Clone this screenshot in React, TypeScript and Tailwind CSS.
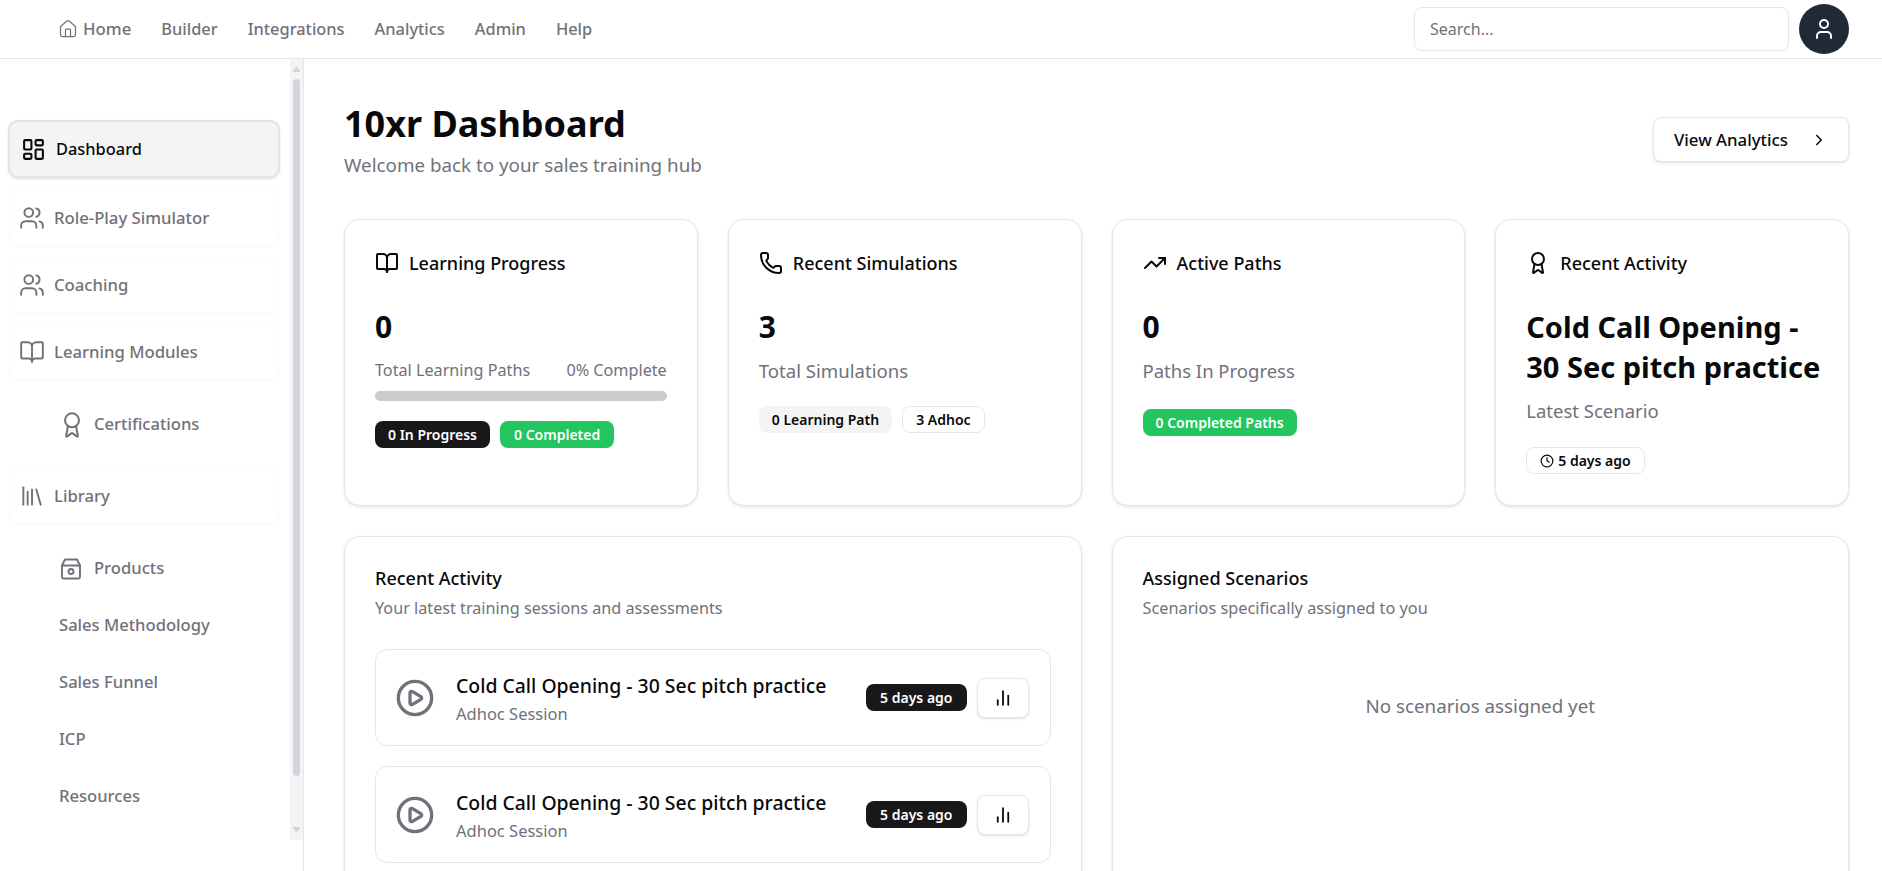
import React from "react";
import {
  House, LayoutDashboard, Users, BookOpen, Award, Library, Phone, TrendingUp, Clock,
  ChevronRight, User, CirclePlay, ChartNoAxesColumn,
} from "lucide-react";

const font = "font-['Noto_Sans','Liberation_Sans',sans-serif]";

function SideCard({ icon, label, active }: { icon: React.ReactNode; label: string; active?: boolean }) {
  return (
    <div
      className={
        active
          ? "flex h-[58px] items-center gap-[10px] rounded-[10px] border-2 border-[#e5e5e5] bg-[#f4f4f5] pl-[11px] text-[16.4px] font-medium text-[#09090b] shadow-sm"
          : "flex h-[57px] items-center gap-[9px] rounded-[10px] border border-[#fbfbfb] bg-white pl-[10px] text-[16.7px] font-medium text-[#71717a] shadow-[0_1px_1px_rgba(0,0,0,0.02)]"
      }
    >
      {icon}
      <span>{label}</span>
    </div>
  );
}

function SubItem({ icon, label }: { icon?: React.ReactNode; label: string }) {
  return (
    <div className="flex h-[57px] items-center gap-[11px] pl-[51px] text-[16.6px] font-medium text-[#71717a]">
      {icon}
      <span>{label}</span>
    </div>
  );
}

function ProductsIcon() {
  return (
    <svg width="24" height="24" viewBox="0 0 24 24" fill="none" stroke="currentColor" strokeWidth="1.9" strokeLinecap="round" strokeLinejoin="round">
      <path d="M3 8.5 L6 2.5 H18 L21 8.5 V20 a1.5 1.5 0 0 1 -1.5 1.5 H4.5 A1.5 1.5 0 0 1 3 20 Z" />
      <path d="M3 8.5 H21" />
      <circle cx="12" cy="14.5" r="2.5" />
    </svg>
  );
}

function Scrollbar() {
  return (
    <div className="flex h-[781px] w-[13px] shrink-0 flex-col items-center bg-[#f3f4f6]">
      <svg width="13" height="20" viewBox="0 0 13 20" className="shrink-0">
        <path d="M6.5 7 L10.5 13 L2.5 13 Z" fill="#d1d5db" />
      </svg>
      <div className="h-[697px] w-[7px] shrink-0 rounded-full bg-[#d1d5db]" />
      <div className="flex-1" />
      <svg width="13" height="20" viewBox="0 0 13 20" className="shrink-0">
        <path d="M6.5 13 L10.5 7 L2.5 7 Z" fill="#d1d5db" />
      </svg>
    </div>
  );
}

function Sidebar() {
  return (
    <aside className="flex h-[813px] w-[304px] shrink-0 items-start border-r border-[#e5e7eb] bg-white">
      <div className="flex w-[290px] shrink-0 flex-col pl-2 pr-[10px] pt-[61px]">
        <SideCard active icon={<LayoutDashboard size={25} strokeWidth={2} />} label="Dashboard" />
        <div className="mt-[11px] flex flex-col gap-[10px]">
          <SideCard icon={<Users size={26} strokeWidth={1.75} />} label="Role-Play Simulator" />
          <SideCard icon={<Users size={26} strokeWidth={1.75} />} label="Coaching" />
          <SideCard icon={<BookOpen size={26} strokeWidth={1.75} />} label="Learning Modules" />
        </div>
        <div className="mt-[16px]">
          <SubItem icon={<Award size={28} strokeWidth={1.75} className="-ml-[1px] -mr-[3px]" />} label="Certifications" />
        </div>
        <div className="mt-[14px]">
          <SideCard icon={<Library size={26} strokeWidth={1.75} />} label="Library" />
        </div>
        <div className="mt-[16px]">
          <SubItem icon={<ProductsIcon />} label="Products" />
          <SubItem label="Sales Methodology" />
          <SubItem label="Sales Funnel" />
          <SubItem label="ICP" />
          <SubItem label="Resources" />
        </div>
      </div>
      <Scrollbar />
    </aside>
  );
}

function Header() {
  const links = ["Builder", "Integrations", "Analytics", "Admin", "Help"];
  return (
    <header className="flex h-[59px] items-center justify-between border-b border-[#e5e7eb] bg-white pl-[58px] pr-[33px]">
      <nav className="flex items-center gap-[30px] text-[16.4px] font-medium text-[#71717a]">
        <span className="flex items-center gap-[5px] text-[16.8px]">
          <House size={20} strokeWidth={1.5} />
          Home
        </span>
        {links.map((l) => (
          <span key={l}>{l}</span>
        ))}
      </nav>
      <div className="flex items-center gap-[10px]">
        <div className="flex h-[44px] w-[375px] items-center rounded-[8px] border border-[#e5e7eb] bg-white px-[15px] text-[16px] text-[#71717a] shadow-[0_1px_2px_rgba(0,0,0,0.04)]">
          Search...
        </div>
        <div className="flex h-[50px] w-[50px] items-center justify-center rounded-full bg-[#1f2937] text-white">
          <User size={24} strokeWidth={2} />
        </div>
      </div>
    </header>
  );
}

function Card({ icon, title, children }: { icon: React.ReactNode; title: string; children: React.ReactNode }) {
  return (
    <div className="h-[287px] rounded-[16px] border border-[#e5e7eb] bg-white px-[30px] pt-[29px] shadow-[0_1px_3px_rgba(0,0,0,0.12)]">
      <div className="flex h-[28px] items-center gap-[10px] text-[18px] font-medium text-[#09090b]">
        {icon}
        <span>{title}</span>
      </div>
      {children}
    </div>
  );
}

function Badge({ className, children }: { className: string; children: React.ReactNode }) {
  return (
    <span className={"inline-flex h-[27px] items-center rounded-[8px] px-[13px] text-[14px] font-semibold " + className}>
      {children}
    </span>
  );
}

function ActivityRow() {
  return (
    <div className="flex h-[97px] items-center rounded-[12px] border border-[#e5e7eb] bg-white pl-[19px] pr-[21px]">
      <CirclePlay size={40} strokeWidth={2} className="shrink-0 text-[#71717a]" />
      <div className="ml-[21px] flex-1 pt-[2px]">
        <div className="text-[19.4px] font-medium leading-[28px] text-[#09090b]">Cold Call Opening - 30 Sec pitch practice</div>
        <div className="mt-[2px] text-[16.5px] leading-[24px] text-[#71717a]">Adhoc Session</div>
      </div>
      <Badge className="bg-[#18181b] px-[14px] text-white">5 days ago</Badge>
      <div className="ml-[10px] flex h-[40px] w-[52px] items-center justify-center rounded-[8px] border border-[#e5e7eb] bg-white text-[#09090b] shadow-sm">
        <ChartNoAxesColumn size={18} strokeWidth={2.4} />
      </div>
    </div>
  );
}

export default function App() {
  return (
    <div className={"h-[871px] w-[1882px] overflow-hidden bg-white " + font}>
      <Header />
      <div className="flex">
        <Sidebar />
        <main className="h-[812px] flex-1 overflow-hidden pl-[40px] pr-[33px] pt-[45px]">
          <div className="flex items-start justify-between">
            <div>
              <h1 className="text-[36px] font-bold leading-[40px] text-[#09090b]">10xr Dashboard</h1>
              <p className="mt-[7px] text-[18.8px] leading-[28px] text-[#71717a]">Welcome back to your sales training hub</p>
            </div>
            <div className="mt-[13px] flex h-[45px] w-[196px] items-center justify-between rounded-[8px] border border-[#e5e7eb] bg-white px-[20px] text-[16.8px] font-medium text-[#09090b] shadow-sm">
              View Analytics
              <ChevronRight size={18} strokeWidth={2} />
            </div>
          </div>

          <div className="mt-[40px] grid grid-cols-4 gap-[30px]">
            <Card icon={<BookOpen size={24} strokeWidth={2} />} title="Learning Progress">
              <div className="mt-[32px] text-[30px] font-bold leading-[36px] text-[#09090b]">0</div>
              <div className="mt-[13px] flex justify-between text-[16.2px] leading-[24px] text-[#71717a]">
                <span>Total Learning Paths</span>
                <span>0% Complete</span>
              </div>
              <div className="mt-[9px] h-[10px] rounded-full bg-[#cccccc]" />
              <div className="mt-[20px] flex gap-[10px]">
                <Badge className="bg-[#18181b] text-white">0 In Progress</Badge>
                <Badge className="bg-[#22c55e] px-[14px] text-white">0 Completed</Badge>
              </div>
            </Card>
            <Card icon={<Phone size={24} strokeWidth={2} />} title="Recent Simulations">
              <div className="mt-[32px] text-[30px] font-bold leading-[36px] text-[#09090b]">3</div>
              <div className="mt-[12px] text-[18.6px] leading-[28px] text-[#71717a]">Total Simulations</div>
              <div className="mt-[21px] flex gap-[10px]">
                <Badge className="bg-[#f4f4f5] font-medium text-[#09090b]">0 Learning Path</Badge>
                <Badge className="border border-[#e5e7eb] bg-white font-medium text-[#09090b]">3 Adhoc</Badge>
              </div>
            </Card>
            <Card icon={<TrendingUp size={24} strokeWidth={2} />} title="Active Paths">
              <div className="mt-[32px] text-[30px] font-bold leading-[36px] text-[#09090b]">0</div>
              <div className="mt-[12px] text-[18.5px] leading-[28px] text-[#71717a]">Paths In Progress</div>
              <div className="mt-[24px] flex gap-[10px]">
                <Badge className="bg-[#22c55e] text-white">0 Completed Paths</Badge>
              </div>
            </Card>
            <Card icon={<Award size={24} strokeWidth={2} />} title="Recent Activity">
              <div className="-mr-[16px] mt-[30px] text-[29px] font-bold leading-[40px] text-[#09090b]">Cold Call Opening - 30 Sec pitch practice</div>
              <div className="mt-[10px] text-[18.5px] leading-[28px] text-[#71717a]">Latest Scenario</div>
              <div className="mt-[22px] flex">
                <Badge className="gap-[4px] border border-[#e5e7eb] bg-white font-medium text-[#09090b]">
                  <Clock size={14} strokeWidth={2} />5 days ago
                </Badge>
              </div>
            </Card>
          </div>

          <div className="mt-[30px] grid grid-cols-2 gap-[30px]">
            <div className="h-[400px] rounded-[16px] border border-[#e5e7eb] bg-white px-[30px] pt-[27px] shadow-[0_1px_3px_rgba(0,0,0,0.12)]">
              <div className="text-[18px] font-medium leading-[28px] text-[#09090b]">Recent Activity</div>
              <div className="mt-[4px] text-[16.2px] leading-[24px] text-[#71717a]">Your latest training sessions and assessments</div>
              <div className="mt-[29px] flex flex-col gap-[20px]">
                <ActivityRow />
                <ActivityRow />
              </div>
            </div>
            <div className="h-[400px] rounded-[16px] border border-[#e5e7eb] bg-white px-[30px] pt-[27px] shadow-[0_1px_3px_rgba(0,0,0,0.12)]">
              <div className="text-[18px] font-medium leading-[28px] text-[#09090b]">Assigned Scenarios</div>
              <div className="mt-[4px] text-[16.3px] leading-[24px] text-[#71717a]">Scenarios specifically assigned to you</div>
              <div className="mt-[72px] text-center text-[18.8px] leading-[28px] text-[#71717a]">No scenarios assigned yet</div>
            </div>
          </div>
        </main>
      </div>
    </div>
  );
}
